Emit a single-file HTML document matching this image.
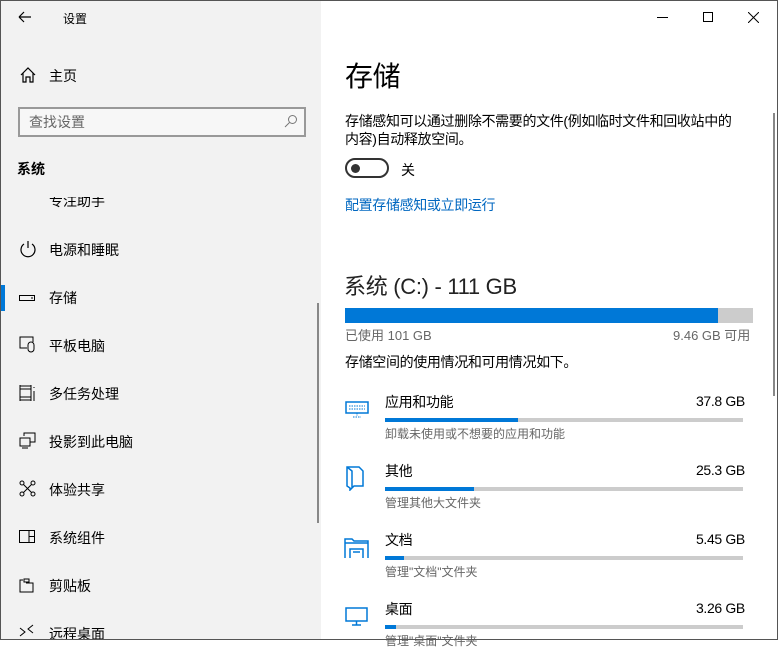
<!DOCTYPE html>
<html><head><meta charset="utf-8"><style>
*{margin:0;padding:0;box-sizing:border-box}
body{width:778px;height:640px;overflow:hidden;font-family:"Liberation Sans","Noto Sans CJK SC",sans-serif;background:#fff;position:relative;color:#000}
.win{position:absolute;left:0;top:0;width:778px;height:640px;border:1px solid #555;}
.left{position:absolute;left:1px;top:1px;width:320px;height:638px;background:#f2f2f2;overflow:hidden}
.t{position:absolute;font-size:14px;white-space:nowrap}
.ic{position:absolute;left:18px;width:18px;height:18px}
.right .t{font-size:14px;letter-spacing:-0.35px}
.bar{position:absolute;height:4px;background:#ccc;left:385px;width:358px}
.bar i{display:block;height:4px;background:#0078d7}
.g{color:#666;font-size:12px!important;letter-spacing:0!important}
</style></head><body>
<div class="left">
 <svg style="position:absolute;left:17px;top:10px" width="14" height="12"><path d="M1 6H13M1 6L6 1M1 6L6 11" stroke="#000" fill="none" stroke-width="1.2"/></svg>
 <div class="t" style="left:62px;top:9px;font-size:12px">设置</div>
 <svg class="ic" style="top:65px" viewBox="0 0 18 18"><path d="M2 9L9 2L16 9M4 7V16H7V11H11V16H14V7" stroke="#000" fill="none" stroke-width="1.2"/></svg>
 <div class="t" style="left:48px;top:65px">主页</div>
 <div style="position:absolute;left:17px;top:106px;width:288px;height:30px;border:2px solid #999;background:#f7f7f7"></div>
 <div class="t" style="left:28px;top:111px;color:#666">查找设置</div>
 <svg style="position:absolute;left:283px;top:113px" width="14" height="14"><circle cx="8.5" cy="5.5" r="4" stroke="#777" fill="none"/><path d="M5.5 8.5L1 13" stroke="#777"/></svg>
 <div class="t" style="left:16px;top:158px;font-weight:bold">系统</div>
 <div class="t" style="left:48px;top:190px;clip-path:inset(6px 0 0 0)">专注助手</div>
 <svg class="ic" style="top:239px" viewBox="0 0 18 18"><path d="M5 4A7 7 0 1 0 13 4M9 1V8" stroke="#000" fill="none" stroke-width="1.2"/></svg>
 <div class="t" style="left:48px;top:239px">电源和睡眠</div>
 <div style="position:absolute;left:0;top:284px;width:4px;height:26px;background:#0078d7"></div>
 <svg class="ic" style="top:288px" viewBox="0 0 18 18"><rect x="0.5" y="6.5" width="15" height="5" stroke="#000" fill="none"/><path d="M12 9H14" stroke="#000"/></svg>
 <div class="t" style="left:48px;top:287px">存储</div>
 <svg class="ic" style="top:335px" viewBox="0 0 18 18"><path d="M8 12H1V1H14V6" stroke="#000" fill="none"/><rect x="9" y="6" width="6" height="10" rx="3" stroke="#000" fill="none"/></svg>
 <div class="t" style="left:48px;top:335px">平板电脑</div>
 <svg class="ic" style="top:383px" viewBox="0 0 18 18"><path d="M1 1V17M1 2H12M1 16H12M1 5H12V13H1M12 1V17M15 3V4M15 7V17" stroke="#000" fill="none"/></svg>
 <div class="t" style="left:48px;top:383px">多任务处理</div>
 <svg class="ic" style="top:431px" viewBox="0 0 18 18"><path d="M5 4V1H16V10H11M1 6H11V14H1ZM3 16H9" stroke="#000" fill="none"/></svg>
 <div class="t" style="left:48px;top:431px">投影到此电脑</div>
 <svg class="ic" style="top:479px" viewBox="0 0 18 18"><circle cx="3" cy="3" r="2" stroke="#000" fill="none"/><circle cx="14" cy="3" r="2" stroke="#000" fill="none"/><circle cx="3" cy="14" r="2" stroke="#000" fill="none"/><circle cx="14" cy="14" r="2" stroke="#000" fill="none"/><path d="M4.5 4.5L12.5 12.5M12.5 4.5L4.5 12.5" stroke="#000"/></svg>
 <div class="t" style="left:48px;top:479px">体验共享</div>
 <svg class="ic" style="top:527px" viewBox="0 0 18 18"><rect x="0.5" y="2.5" width="15" height="12" stroke="#000" fill="none"/><path d="M10 3V14M10 8.5H15" stroke="#000"/></svg>
 <div class="t" style="left:48px;top:527px">系统组件</div>
 <svg class="ic" style="top:575px" viewBox="0 0 18 18"><path d="M4 4H1V16H14V11M5 3H10V6H5Z M7 7H14V16" stroke="#000" fill="none"/></svg>
 <div class="t" style="left:48px;top:575px">剪贴板</div>
 <svg class="ic" style="top:623px" viewBox="0 0 18 18"><path d="M1 4L6 8L1 12M14 1L9 5L14 9" stroke="#000" fill="none"/></svg>
 <div class="t" style="left:48px;top:623px">远程桌面</div>
 <div style="position:absolute;left:316px;top:302px;width:2px;height:220px;background:#888"></div>
</div>
<div class="right">
 <div style="position:absolute;left:657px;top:17px;width:11px;height:1px;background:#000"></div>
 <div style="position:absolute;left:703px;top:12px;width:10px;height:10px;border:1px solid #000"></div>
 <svg style="position:absolute;left:748px;top:12px" width="11" height="11"><path d="M0 0L11 11M11 0L0 11" stroke="#000"/></svg>
 <div class="t" style="left:345px;top:55px;font-size:28px!important">存储</div>
 <div class="t" style="left:345px;top:112px;line-height:18px">存储感知可以通过删除不需要的文件(例如临时文件和回收站中的<br>内容)自动释放空间。</div>
 <div style="position:absolute;left:345px;top:158px;width:44px;height:20px;border:2px solid #333;border-radius:10px"></div>
 <div style="position:absolute;left:351px;top:164px;width:9px;height:9px;border-radius:50%;background:#333"></div>
 <div class="t" style="left:401px;top:160px">关</div>
 <div class="t" style="left:345px;top:195px;color:#0067c0">配置存储感知或立即运行</div>
 <div class="t" style="left:344px;top:269px;font-size:22px!important;color:#222;letter-spacing:-0.3px">系统 (C:) - 111 GB</div>
 <div style="position:absolute;left:345px;top:308px;width:408px;height:15px;background:#ccc"><div style="width:373px;height:15px;background:#0078d7"></div></div>
 <div class="t g" style="left:345px;top:325px;font-size:13px!important">已使用 101 GB</div>
 <div class="t g" style="left:673px;top:325px;font-size:13px!important">9.46 GB 可用</div>
 <div class="t" style="left:345px;top:352px">存储空间的使用情况和可用情况如下。</div>

 <svg style="position:absolute;left:345px;top:401px" width="24" height="18"><rect x="1" y="1" width="22" height="11" stroke="#0078d7" fill="none" stroke-width="1.5"/><path d="M4 5H20M4 8H20M12 12V15M8 16H16" stroke="#0078d7" stroke-dasharray="1.5 1"/></svg>
 <div class="t" style="left:385px;top:392px">应用和功能</div><div class="t" style="left:696px;top:393px">37.8 GB</div>
 <div class="bar" style="top:418px"><i style="width:133px"></i></div>
 <div class="t g" style="left:385px;top:425px">卸载未使用或不想要的应用和功能</div>

 <svg style="position:absolute;left:345px;top:465px" width="20" height="26"><path d="M2 2H14L18 6V21H9L5 25V23L2 21Z M2 2L7 6V23" stroke="#0078d7" fill="none" stroke-width="1.5"/></svg>
 <div class="t" style="left:385px;top:461px">其他</div><div class="t" style="left:696px;top:462px">25.3 GB</div>
 <div class="bar" style="top:487px"><i style="width:89px"></i></div>
 <div class="t g" style="left:385px;top:494px">管理其他大文件夹</div>

 <svg style="position:absolute;left:344px;top:537px" width="26" height="22"><path d="M1 21V2H8L10 4H24V21M1 6H24M6 21V12H19V21M9 15H16" stroke="#0078d7" fill="none" stroke-width="1.5"/></svg>
 <div class="t" style="left:385px;top:530px">文档</div><div class="t" style="left:696px;top:531px">5.45 GB</div>
 <div class="bar" style="top:556px"><i style="width:19px"></i></div>
 <div class="t g" style="left:385px;top:563px">管理"文档"文件夹</div>

 <svg style="position:absolute;left:345px;top:607px" width="24" height="20"><rect x="1" y="1" width="21" height="13" stroke="#0078d7" fill="none" stroke-width="1.5"/><path d="M11.5 14V18M7 18H16" stroke="#0078d7" stroke-width="1.5"/></svg>
 <div class="t" style="left:385px;top:599px">桌面</div><div class="t" style="left:696px;top:600px">3.26 GB</div>
 <div class="bar" style="top:625px"><i style="width:11px"></i></div>
 <div class="t g" style="left:385px;top:632px">管理"桌面"文件夹</div>
 <div style="position:absolute;left:773px;top:113px;width:2px;height:283px;background:#888"></div>
</div>
<div class="win"></div>
</body></html>
